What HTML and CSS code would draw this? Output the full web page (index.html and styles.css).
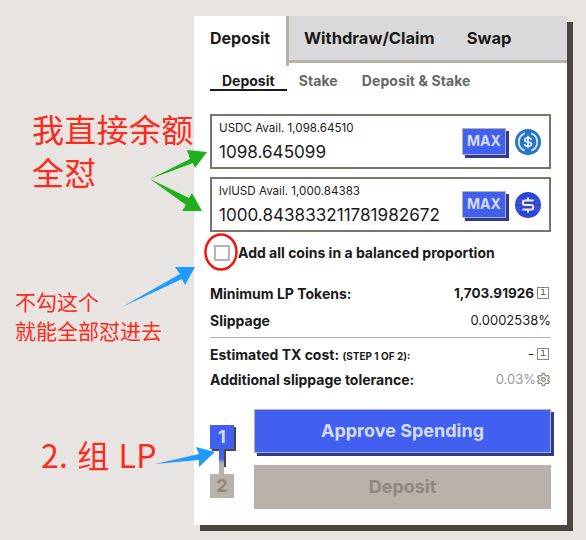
FILE: index.html
```html
<!DOCTYPE html>
<html lang="zh">
<head>
  <meta charset="UTF-8">
  <title>Deposit</title>
  <link rel="stylesheet" href="styles.css">
</head>
<body>
  <div class="card">
    <div class="tabs">
      <div class="tab active">Deposit</div>
      <div class="tab">Withdraw/Claim</div>
      <div class="tab">Swap</div>
    </div>
    <div class="content">
      <div class="subtabs">
        <div class="subtab active">Deposit</div>
        <div class="subtab">Stake</div>
        <div class="subtab">Deposit &amp; Stake</div>
      </div>

      <div class="coin-box">
        <div class="coin-text">
          <div class="avail">USDC Avail. 1,098.64510</div>
          <div class="amount">1098.645099</div>
        </div>
        <button class="max">MAX</button>
        <svg class="coin-icon" viewBox="0 0 26 26">
          <circle cx="13" cy="13" r="13" fill="#2775ca"/>
          <path d="M9.800 4.300a9.300 9.300 0 0 0 0 17.400M16.200 4.300a9.300 9.300 0 0 1 0 17.400" fill="none" stroke="#dbe8f6" stroke-width="1.800"/>
          <path d="M16.400 10.800c-.4-1.300-1.700-1.900-3.400-1.900-1.900 0-3.300.9-3.300 2.200 0 3 6.800 1.200 6.800 4 0 1.300-1.500 2.100-3.500 2.100-1.800 0-3.100-.7-3.500-2M13 6.800v12.400" fill="none" stroke="#e6eff9" stroke-width="1.700"/>
        </svg>
      </div>

      <div class="coin-box">
        <div class="coin-text">
          <div class="avail">lvlUSD Avail. 1,000.84383</div>
          <div class="amount">1000.843833211781982672</div>
        </div>
        <button class="max">MAX</button>
        <svg class="coin-icon" viewBox="0 0 26 26">
          <circle cx="13" cy="13" r="13" fill="#2f45d8"/>
          <path d="M2 8h22M1 11h5M20 11h5M1 15h5M20 15h5M2 18h22" stroke="#5468e4" stroke-width=".7"/>
          <path d="M18.500 8.500H10a2.250 2.250 0 0 0 0 4.500h6a2.250 2.250 0 0 1 0 4.500H7.500M13 5.500v3M13 17.500v3" fill="none" stroke="#eef0fc" stroke-width="2"/>
        </svg>
      </div>

      <label class="check-row">
        <span class="check"></span>
        <span>Add all coins in a balanced proportion</span>
      </label>

      <div class="row first">
        <span class="row-label">Minimum LP Tokens:</span>
        <span class="row-value bold">1,703.91926<span class="info">i</span></span>
      </div>
      <div class="row second">
        <span class="row-label">Slippage</span>
        <span class="row-value">0.0002538%</span>
      </div>
      <hr class="divider">
      <div class="row third">
        <span class="row-label">Estimated TX cost: <small>(STEP 1 OF 2):</small></span>
        <span class="row-value">-<span class="info">i</span></span>
      </div>
      <div class="row fourth">
        <span class="row-label">Additional slippage tolerance:</span>
        <span class="row-value muted">0.03%<svg class="gear" viewBox="0 0 24 24"><path d="M12.220 2h-.44a2 2 0 0 0-2 2v.18a2 2 0 0 1-1 1.730l-.43.25a2 2 0 0 1-2 0l-.15-.08a2 2 0 0 0-2.730.73l-.22.38a2 2 0 0 0 .73 2.730l.15.1a2 2 0 0 1 1 1.720v.51a2 2 0 0 1-1 1.740l-.15.09a2 2 0 0 0-.73 2.730l.22.38a2 2 0 0 0 2.730.73l.15-.08a2 2 0 0 1 2 0l.43.25a2 2 0 0 1 1 1.730V20a2 2 0 0 0 2 2h.44a2 2 0 0 0 2-2v-.18a2 2 0 0 1 1-1.730l.43-.25a2 2 0 0 1 2 0l.15.08a2 2 0 0 0 2.730-.73l.22-.39a2 2 0 0 0-.73-2.730l-.15-.08a2 2 0 0 1-1-1.740v-.5a2 2 0 0 1 1-1.740l.15-.09a2 2 0 0 0 .73-2.730l-.22-.38a2 2 0 0 0-2.730-.73l-.15.08a2 2 0 0 1-2 0l-.43-.25a2 2 0 0 1-1-1.730V4a2 2 0 0 0-2-2z" fill="none" stroke="#77736c" stroke-width="1.700"/><circle cx="12" cy="12" r="3" fill="none" stroke="#77736c" stroke-width="1.700"/></svg></span>
      </div>

      <div class="actions">
        <div class="steps">
          <div class="step current">1</div>
          <div class="step-line"></div>
          <div class="step">2</div>
        </div>
        <div class="buttons">
          <button class="btn primary">Approve Spending</button>
          <button class="btn disabled">Deposit</button>
        </div>
      </div>
    </div>
  </div>

  <!-- notes drawn on top of the screenshot -->
  <div class="note big note-a">我直接余额<br>全怼</div>
  <div class="note small note-b">不勾这个<br>就能全部怼进去</div>
  <div class="note big note-c">2. 组 LP</div>
  <svg class="marks" viewBox="0 0 586 540">
    <polygon points="150,179 190,159 187,150 207,152 195,168 193,163" fill="#1fae1c"/>
    <polygon points="150,179 189,198 192,193 202,211 182,211 186,205" fill="#1fae1c"/>
    <polygon points="122,307 180,274 175,267 195,267 185,285 182,279" fill="#1e9bff"/>
    <polygon points="155,464 199,454 196,447 215,452 199,467 199,460" fill="#1e9bff"/>
    <ellipse cx="221" cy="252" rx="15.500" ry="17.500" fill="none" stroke="#f5130f" stroke-width="2.500"/>
  </svg>
</body>
</html>
```

FILE: styles.css
```css
body {
  margin: 0;
  height: 540px;
  overflow: hidden;
  background: #e8e4e1;
  font-family: Inter, "Liberation Sans", sans-serif;
  color: #1a1a1a;
}

.card {
  width: 373px;
  height: 509px;
  margin: 16px 0 0 194px;
  background: #fff;
  box-shadow: 6px 6px 0 #4a453f;
}

.tabs {
  display: flex;
  height: 44px;
  background: #d9d9d9;
  border-bottom: 3px solid #b8b2aa;
}

.tab {
  padding: 13px 0 0 15px;
  margin-right: 17px;
  font-size: 16.500px;
  font-weight: 700;
  line-height: 18px;
}

.tab.active {
  width: 76px;
  height: 34px;
  margin-right: 0;
  padding-left: 16px;
  padding-bottom: 3px;
  background: #fff;
  border-right: 3px solid #b8b2aa;
  font-size: 16px;
}

.content {
  padding: 0 16px;
}

.subtabs {
  display: flex;
  margin-top: 10px;
  height: 18px;
}

.subtab {
  padding: 0 12px;
  font-size: 14px;
  font-weight: 700;
  line-height: 16px;
  letter-spacing: .1px;
  color: #666;
}

.subtab.active {
  letter-spacing: 0;
  color: #1a1a1a;
  border-bottom: 2px solid #1a1a1a;
}

.coin-box {
  display: flex;
  align-items: center;
  height: 51px;
  margin-top: 8px;
  padding-left: 7px;
  padding-right: 8px;
  border: 2px solid #7a756c;
}

.subtabs + .coin-box {
  margin-top: 23px;
}

.coin-text {
  flex: 1;
}

.avail {
  font-size: 11.600px;
  line-height: 14px;
}

.amount {
  font-size: 17.100px;
  line-height: 22px;
  margin-top: 6px;
}

.max {
  width: 44px;
  height: 27px;
  padding: 0 0 2px;
  margin-right: 9px;
  border: 1px solid #b8b2aa;
  background: #4160f0;
  box-shadow: 3px 3px 0 #2a3a96;
  color: #d5dbfb;
  font-family: inherit;
  font-size: 14px;
  font-weight: 700;
}

.coin-icon {
  width: 26px;
  height: 26px;
}

.check-row {
  display: flex;
  align-items: center;
  gap: 8px;
  height: 17px;
  margin-top: 12px;
  margin-left: 4px;
  font-size: 14px;
  font-weight: 700;
}

.check {
  width: 12px;
  height: 12px;
  border: 2px solid #b8b2aa;
}

.row {
  display: flex;
  justify-content: space-between;
  align-items: center;
  height: 18px;
  font-size: 13px;
}

.row.first { margin-top: 23px; }
.row.second { margin-top: 9px; }
.row.third { margin-top: 0; }
.row.fourth { margin-top: 7px; }

.row-label {
  font-size: 14px;
  font-weight: 700;
}

.row-label small {
  font-size: 10px;
}

.row-value {
  display: flex;
  align-items: center;
}

.row-value.bold {
  font-size: 13.500px;
  font-weight: 700;
}

.row-value.muted {
  color: #999;
}

.info {
  width: 10px;
  height: 10px;
  margin: 0 2px 0 3px;
  border: 1px solid #8a857d;
  font-family: "Liberation Mono", monospace;
  font-size: 10px;
  font-weight: 400;
  line-height: 10px;
  text-align: center;
  color: #55514b;
}

.gear {
  width: 15px;
  height: 15px;
}

.divider {
  height: 1px;
  margin: 8px 0 7px;
  border: 0;
  background: #b8b2aa;
}

.actions {
  display: flex;
  margin-top: 21px;
}

.steps {
  width: 44px;
  padding-top: 16px;
}

.step {
  width: 24px;
  height: 24px;
  background: #b8b2aa;
  color: #8f887f;
  font-size: 18px;
  font-weight: 700;
  line-height: 24px;
  text-align: center;
}

.step.current {
  background: #4160f0;
  color: #d5dbfb;
  box-shadow: 2px 2px 0 #4a453f;
}

.step-line {
  width: 7px;
  height: 25px;
  margin-left: 9px;
  background:
    linear-gradient(#4160f0 0 10px, #b8b2aa 14px) 0 0 / 5px 100% no-repeat,
    linear-gradient(#4a453f, #4a453f) 5px 0 / 2px 18px no-repeat;
}

.buttons {
  flex: 1;
  display: flex;
  flex-direction: column;
  gap: 12px;
}

.btn {
  width: 297px;
  height: 44px;
  padding: 0 0 2px;
  font-family: inherit;
  font-size: 18px;
  font-weight: 700;
}

.btn.primary {
  border: 1px solid #b8b2aa;
  background: #4160f0;
  box-shadow: 3px 3px 0 #2a3a96;
  color: #d5dbfb;
}

.btn.disabled {
  border: 0;
  background: #b8b2aa;
  color: #8f887f;
}

.note {
  position: absolute;
  left: 33px;
  color: #fb2a1c;
  font-family: "Noto Sans CJK SC", sans-serif;
  white-space: nowrap;
}

.note.big {
  font-size: 32px;
  line-height: 43px;
}

.note.small {
  font-size: 21px;
  line-height: 29px;
}

.note-a { top: 107px; left: 32px; letter-spacing: .3px; }
.note-b { top: 287px; left: 15px; }
.note-c { top: 433px; left: 41px; letter-spacing: .3px; word-spacing: 1.500px; }

.marks {
  position: absolute;
  left: 0;
  top: 0;
  width: 586px;
  height: 540px;
  pointer-events: none;
}
```
